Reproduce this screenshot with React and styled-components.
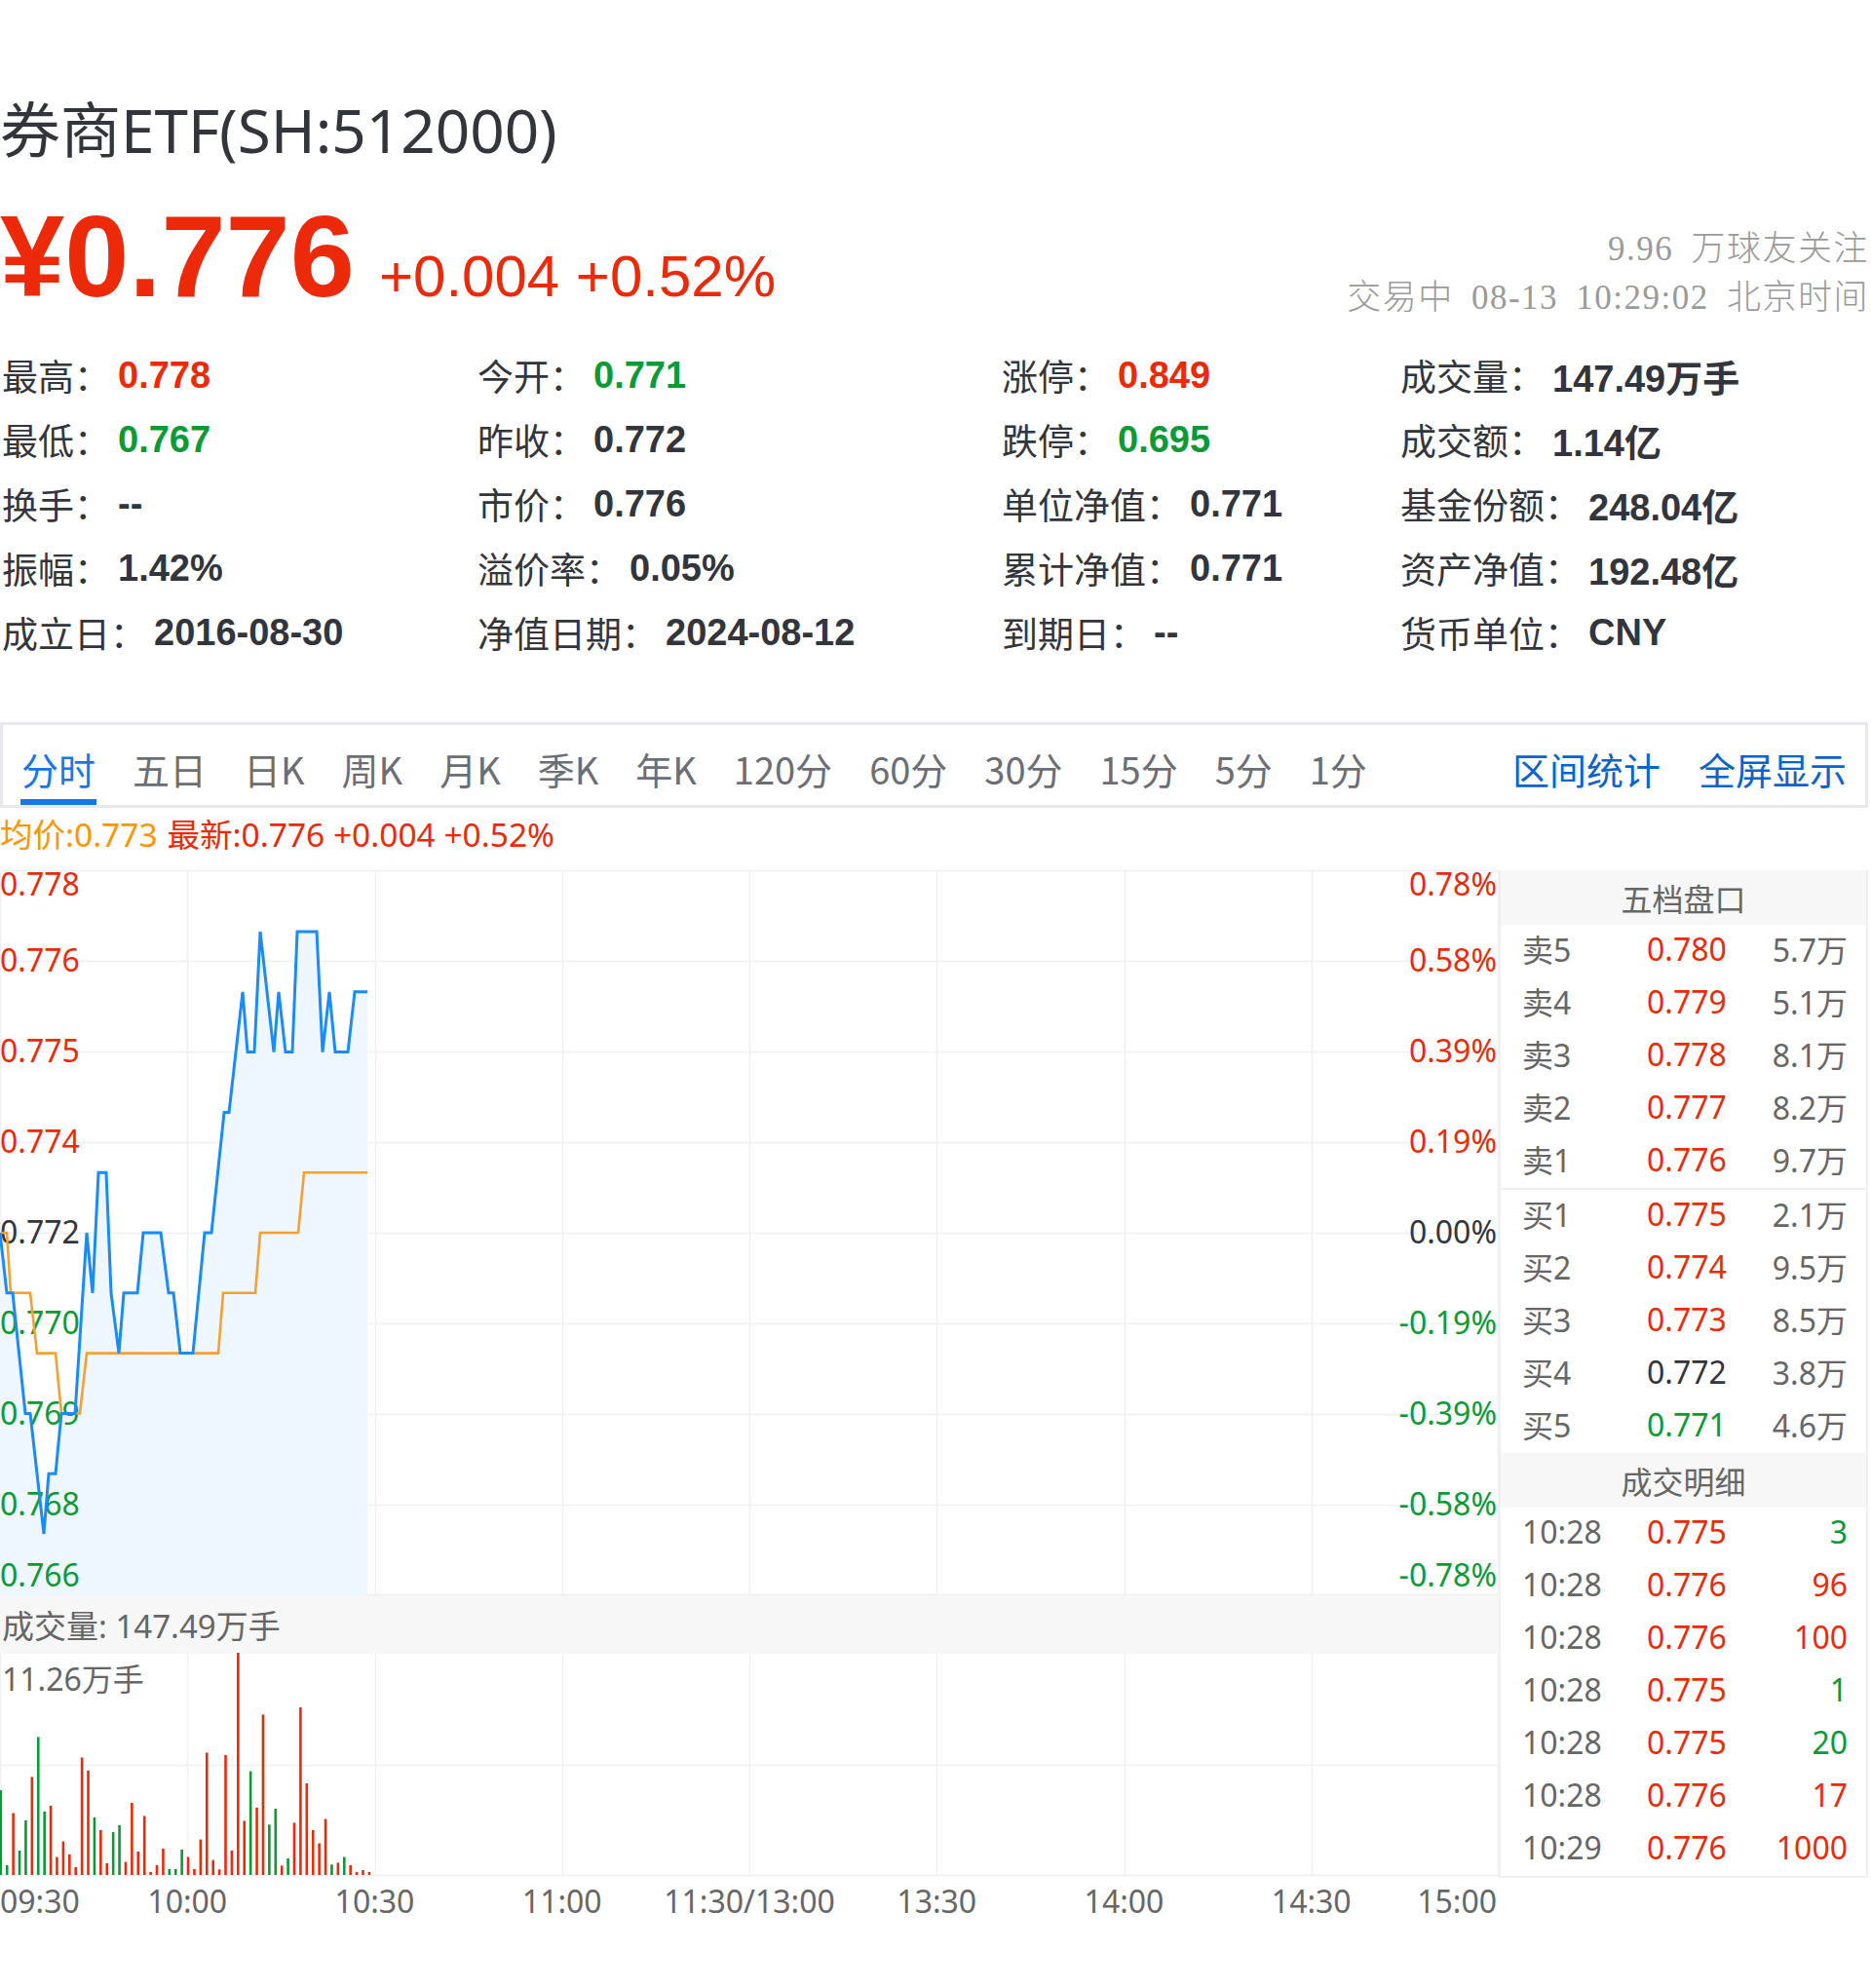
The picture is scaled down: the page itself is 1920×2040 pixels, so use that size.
import React from 'react';
import styled, { createGlobalStyle } from 'styled-components';

const RED = '#ec2a0a';
const GREEN = '#0b9a36';
const DARK = '#33353c';
const GRAY = '#666';
const SANS = '"Noto Sans", "Noto Sans CJK SC", sans-serif';

// chart geometry
const W = 1538;
const PRICE_H = 744;
const STEP = 93;
const PRE = 0.772;
const UNIT = 0.001505;
const py = (p) => 372 - ((p - PRE) / UNIT) * STEP;
const MIN_W = W / 240;

const stats = [
  ['最高', '0.778', RED], ['今开', '0.771', GREEN], ['涨停', '0.849', RED], ['成交量', '147.49万手', DARK],
  ['最低', '0.767', GREEN], ['昨收', '0.772', DARK], ['跌停', '0.695', GREEN], ['成交额', '1.14亿', DARK],
  ['换手', '--', DARK], ['市价', '0.776', DARK], ['单位净值', '0.771', DARK], ['基金份额', '248.04亿', DARK],
  ['振幅', '1.42%', DARK], ['溢价率', '0.05%', DARK], ['累计净值', '0.771', DARK], ['资产净值', '192.48亿', DARK],
  ['成立日', '2016-08-30', DARK], ['净值日期', '2024-08-12', DARK], ['到期日', '--', DARK], ['货币单位', 'CNY', DARK],
];

const tabs = ['分时', '五日', '日K', '周K', '月K', '季K', '年K', '120分', '60分', '30分', '15分', '5分', '1分'];

const priceTicks = [
  ['0.778', '0.78%', RED], ['0.776', '0.58%', RED], ['0.775', '0.39%', RED], ['0.774', '0.19%', RED],
  ['0.772', '0.00%', DARK], ['0.770', '-0.19%', GREEN], ['0.769', '-0.39%', GREEN], ['0.768', '-0.58%', GREEN],
  ['0.766', '-0.78%', GREEN],
];

const pricePts = [
  [0, 0.772], [7, 0.771], [13, 0.771], [26, 0.769], [31, 0.769], [45, 0.767], [50, 0.768], [57, 0.768],
  [63, 0.769], [77, 0.769], [89, 0.772], [95, 0.771], [101, 0.773], [109, 0.773], [114, 0.771], [122, 0.770],
  [127, 0.771], [141, 0.771], [147, 0.772], [165, 0.772], [173, 0.771], [178, 0.771], [185, 0.770], [198, 0.770],
  [210, 0.772], [217, 0.772], [230, 0.774], [235, 0.774], [249, 0.776], [254, 0.775], [261, 0.775], [267, 0.777],
  [281, 0.775], [286, 0.776], [293, 0.775], [300, 0.775], [305, 0.777], [325, 0.777], [331, 0.775], [338, 0.776],
  [344, 0.775], [357, 0.775], [364, 0.776], [377, 0.776],
];

const avgPts = [
  [2, 0.772], [7, 0.772], [11, 0.771], [31, 0.771], [38, 0.770], [57, 0.770], [63, 0.769], [82, 0.769],
  [89, 0.770], [224, 0.770], [229, 0.771], [262, 0.771], [267, 0.772], [306, 0.772], [312, 0.773], [377, 0.773],
];

const volHeights = [
  87, 10, 63.5, 25, 56, 100.6, 141.6, 65, 71, 18.4, 34.4, 21, 8, 120.5, 107, 59, 46, 12, 44, 51,
  13.4, 74, 24, 60.5, 3, 10, 27, 6, 6, 26, 18.4, 6, 36.4, 125.5, 15.3, 5.7, 123, 25, 228, 55.5,
  106.4, 69, 164.6, 51.7, 68, 9.6, 17, 53.6, 172, 94, 46, 32.5, 57.4, 10.7, 12.6, 18.4, 10, 3, 5, 3,
];
const volColors = 'GGRGGRGGRRRRRRRGRRGGRRRRRRRGGGRRRRRRRRRRGRRGGRGRRRRRRGRGRRRRR';

const timeTicks = ['09:30', '10:00', '10:30', '11:00', '11:30/13:00', '13:30', '14:00', '14:30', '15:00'];

const sells = [
  ['卖5', '0.780', '5.7万', RED], ['卖4', '0.779', '5.1万', RED], ['卖3', '0.778', '8.1万', RED],
  ['卖2', '0.777', '8.2万', RED], ['卖1', '0.776', '9.7万', RED],
];
const buys = [
  ['买1', '0.775', '2.1万', RED], ['买2', '0.774', '9.5万', RED], ['买3', '0.773', '8.5万', RED],
  ['买4', '0.772', '3.8万', DARK], ['买5', '0.771', '4.6万', GREEN],
];
const trades = [
  ['10:28', '0.775', '3', GREEN], ['10:28', '0.776', '96', RED], ['10:28', '0.776', '100', RED],
  ['10:28', '0.775', '1', GREEN], ['10:28', '0.775', '20', GREEN], ['10:28', '0.776', '17', RED],
  ['10:29', '0.776', '1000', RED],
];

const toPath = (pts) => pts.map(([x, p], i) => `${i ? 'L' : 'M'}${x} ${py(p).toFixed(1)}`).join(' ');
const gridX = (k) => Math.min(W - 0.5, Math.max(0.5, Math.round(k * (W / 8)) + 0.5));

export default function App() {
  const linePath = toPath(pricePts);
  const fillPath = `${linePath} L377 ${PRICE_H} L0 ${PRICE_H} Z`;

  return (
    <Page>
      <GlobalStyle />
      <Title>券商ETF(SH:512000)</Title>

      <QuoteRow>
        <PriceGroup>
          <Price>¥0.776</Price>
          <Change>+0.004 +0.52%</Change>
        </PriceGroup>
        <MetaInfo>
          <div>9.96 万球友关注</div>
          <div>交易中 08-13 10:29:02 北京时间</div>
        </MetaInfo>
      </QuoteRow>

      <StatsGrid>
        {stats.map(([label, value, color]) => (
          <StatItem key={label}>
            <StatLabel>{label}：</StatLabel>
            <StatValue $color={color}>{value}</StatValue>
          </StatItem>
        ))}
      </StatsGrid>

      <TabBar>
        <TabList>
          {tabs.map((t, i) => (
            <Tab key={t} $active={i === 0}>{t}</Tab>
          ))}
        </TabList>
        <Actions>
          <Action>区间统计</Action>
          <Action>全屏显示</Action>
        </Actions>
      </TabBar>

      <Legend>
        <LegendItem $color="#ff9500">均价:0.773</LegendItem>
        <LegendItem $color={RED}>最新:0.776 +0.004 +0.52%</LegendItem>
      </Legend>

      <ChartSection>
        <ChartColumn>
          <ChartSvg width={W} height={PRICE_H}>
            {Array.from({ length: 9 }, (_, k) => {
              const y = k === 0 ? 0.5 : k === 8 ? PRICE_H - 0.5 : k * STEP + 0.5;
              return <GridLine key={`h${k}`} x1={0} x2={W} y1={y} y2={y} />;
            })}
            {Array.from({ length: 9 }, (_, k) => (
              <GridLine key={`v${k}`} x1={gridX(k)} x2={gridX(k)} y1={0} y2={PRICE_H} />
            ))}
            <path d={fillPath} fill="#eef6ff" />
            {priceTicks.map(([p, pct, color], k) => {
              const y = k === 0 ? 26 : k === 8 ? 735 : k * STEP + 11;
              return (
                <g key={p}>
                  <AxisText x={0} y={y} $color={color}>{p}</AxisText>
                  <AxisText x={1536} y={y} $color={color} textAnchor="end">{pct}</AxisText>
                </g>
              );
            })}
            <path d={toPath(avgPts)} fill="none" stroke="#f5a030" strokeWidth="2.6" />
            <path d={linePath} fill="none" stroke="#1a8bf8" strokeWidth="3" />
          </ChartSvg>

          <VolumeTitle>成交量: 147.49万手</VolumeTitle>

          <ChartSvg width={W} height={228}>
            <GridLine x1={0} x2={W} y1={114.5} y2={114.5} />
            <GridLine x1={0} x2={W} y1={227.5} y2={227.5} />
            {Array.from({ length: 9 }, (_, k) => (
              <GridLine key={`vv${k}`} x1={gridX(k)} x2={gridX(k)} y1={0} y2={228} />
            ))}
            <AxisText x={2} y={38} $color={GRAY}>11.26万手</AxisText>
            {volHeights.map((h, i) => (
              <rect
                key={i}
                x={i * MIN_W - 0.5}
                y={227 - h}
                width={2.6}
                height={h}
                fill={volColors[i] === 'G' ? GREEN : RED}
              />
            ))}
          </ChartSvg>

          <ChartSvg width={W} height={54}>
            {timeTicks.map((t, k) => (
              <AxisText
                key={t}
                x={k === 0 ? 0 : k === 8 ? 1536 : k * (W / 8)}
                y={38}
                $color={GRAY}
                textAnchor={k === 0 ? 'start' : k === 8 ? 'end' : 'middle'}
              >
                {t}
              </AxisText>
            ))}
          </ChartSvg>
        </ChartColumn>

        <SidePanel>
          <PanelHeader>五档盘口</PanelHeader>
          <OrderGroup>
            {sells.map(([l, p, v, c]) => (
              <PanelRow key={l}>
                <Cell $color={GRAY}>{l}</Cell>
                <Cell $color={c}>{p}</Cell>
                <Cell $color={GRAY}>{v}</Cell>
              </PanelRow>
            ))}
          </OrderGroup>
          <OrderGroup $divided>
            {buys.map(([l, p, v, c]) => (
              <PanelRow key={l}>
                <Cell $color={GRAY}>{l}</Cell>
                <Cell $color={c}>{p}</Cell>
                <Cell $color={GRAY}>{v}</Cell>
              </PanelRow>
            ))}
          </OrderGroup>
          <PanelHeader>成交明细</PanelHeader>
          {trades.map(([t, p, v, c], i) => (
            <PanelRow key={i}>
              <Cell $color={GRAY}>{t}</Cell>
              <Cell $color={RED}>{p}</Cell>
              <Cell $color={c}>{v}</Cell>
            </PanelRow>
          ))}
        </SidePanel>
      </ChartSection>
    </Page>
  );
}

const GlobalStyle = createGlobalStyle`
  html, body {
    margin: 0;
    padding: 0;
    background: #fff;
  }
  body {
    font-family: ${SANS};
    color: ${DARK};
  }
`;

const Page = styled.div`
  width: 1918px;
  padding-bottom: 60px;
`;

const Title = styled.h1`
  margin: 0;
  padding-top: 96px;
  font-family: ${SANS};
  font-size: 62px;
  line-height: 74px;
  font-weight: 400;
  color: ${DARK};
`;

const QuoteRow = styled.div`
  margin-top: 34px;
  display: flex;
  justify-content: space-between;
  align-items: flex-end;
`;

const PriceGroup = styled.div`
  display: flex;
  align-items: baseline;
  height: 117px;
`;

const Price = styled.span`
  font-family: "Liberation Sans", Arial, sans-serif;
  font-size: 119px;
  line-height: 117px;
  font-weight: 700;
  color: ${RED};
`;

const Change = styled.span`
  margin-left: 25px;
  font-family: "Liberation Sans", Arial, sans-serif;
  font-size: 60px;
  color: ${RED};
`;

const MetaInfo = styled.div`
  margin-bottom: -10px;
  text-align: right;
  font-family: "Liberation Serif", "Noto Sans CJK SC", serif;
  font-weight: 300;
  font-size: 35px;
  line-height: 50px;
  letter-spacing: 1.5px;
  word-spacing: 8px;
  color: #9a9a9a;
`;

const StatsGrid = styled.div`
  margin-top: 31px;
  display: grid;
  grid-template-columns: 488px 538px 409px 1fr;
  grid-auto-rows: 66px;
`;

const StatItem = styled.div`
  display: flex;
  align-items: center;
  padding-left: 2px;
  font-size: 37px;
`;

const StatLabel = styled.span`
  font-family: "Noto Sans CJK SC", sans-serif;
  color: ${DARK};
`;

const StatValue = styled.span`
  margin-left: 8px;
  font-family: "Liberation Sans", "Noto Sans CJK SC", sans-serif;
  font-weight: 700;
  font-size: 38px;
  color: ${(p) => p.$color};
`;

const TabBar = styled.div`
  margin-top: 59px;
  height: 88px;
  box-sizing: border-box;
  border: 3px solid #e8e9ed;
  display: flex;
  justify-content: space-between;
  align-items: stretch;
  width: 1917px;
  font-family: "Noto Sans CJK SC", "Noto Sans", sans-serif;
`;

const TabList = styled.div`
  display: flex;
`;

const Tab = styled.div`
  position: relative;
  display: flex;
  align-items: center;
  padding: 6px 19px 0;
  font-size: 38px;
  color: ${(p) => (p.$active ? '#1a76e6' : '#6b6e75')};

  &::after {
    content: '';
    display: ${(p) => (p.$active ? 'block' : 'none')};
    position: absolute;
    left: 18px;
    right: 18px;
    bottom: 0;
    height: 6px;
    background: #1a76e6;
  }
`;

const Actions = styled.div`
  display: flex;
  align-items: center;
  gap: 39px;
  padding: 6px 19px 0 0;
`;

const Action = styled.span`
  font-size: 38px;
  color: #0c63c9;
`;

const Legend = styled.div`
  display: flex;
  gap: 10px;
  height: 50px;
  align-items: center;
  font-size: 33.5px;
`;

const LegendItem = styled.span`
  color: ${(p) => p.$color};
`;

const ChartSection = styled.div`
  margin-top: 14px;
  display: flex;
  align-items: flex-start;
`;

const ChartColumn = styled.div`
  width: ${W}px;
  flex: none;
`;

const ChartSvg = styled.svg`
  display: block;
  overflow: visible;
`;

const GridLine = styled.line`
  stroke: #eff0f2;
  stroke-width: 1.5;
`;

const AxisText = styled.text`
  font-family: ${SANS};
  font-size: 32px;
  fill: ${(p) => p.$color};
`;

const VolumeTitle = styled.div`
  height: 60px;
  display: flex;
  align-items: center;
  padding-left: 2px;
  background: #f7f7f7;
  font-size: 33px;
  color: ${GRAY};
`;

const SidePanel = styled.aside`
  width: 379px;
  flex: none;
  box-sizing: border-box;
  border: 2px solid #f0f0f0;
  border-top: none;
`;

const PanelHeader = styled.div`
  height: 56px;
  display: flex;
  align-items: center;
  justify-content: center;
  background: #f7f7f7;
  font-size: 32px;
  color: ${GRAY};
`;

const OrderGroup = styled.div`
  border-top: ${(p) => (p.$divided ? '2px solid #f0f0f0' : 'none')};
`;

const PanelRow = styled.div`
  height: 54px;
  box-sizing: border-box;
  display: grid;
  grid-template-columns: 128px 1fr auto;
  align-items: center;
  padding: 0 19px 6px 22px;
  font-size: 32px;
`;

const Cell = styled.span`
  color: ${(p) => p.$color};
`;
